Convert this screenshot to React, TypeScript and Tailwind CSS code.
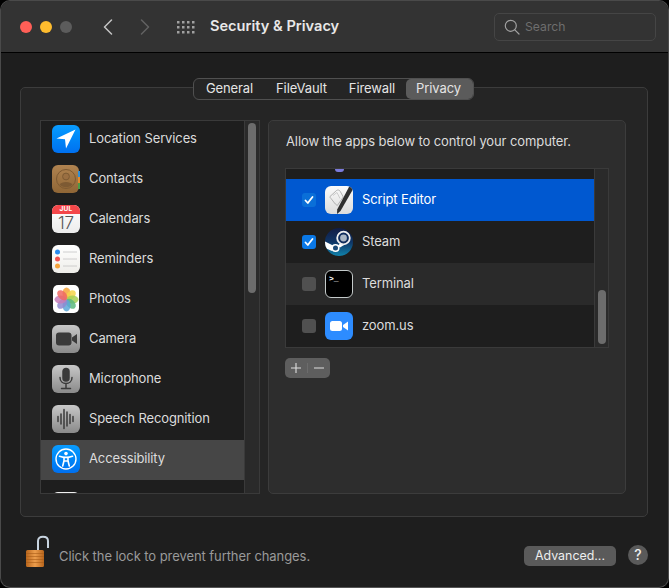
import React from "react";

const Tile = ({ className = "", children }: { className?: string; children?: React.ReactNode }) => (
  <div className={`w-[28px] h-[28px] shrink-0 rounded-[6px] flex items-center justify-center overflow-hidden ${className}`}>{children}</div>
);

const LocationIcon = () => (
  <Tile className="bg-linear-to-b from-[#0a9cff] to-[#0070f0]">
    <svg width="28" height="28" viewBox="0 0 28 28"><path d="M4.5 13.5 23.5 4.5 14 23.5 13 14.2Z" fill="#fff" /></svg>
  </Tile>
);
const ContactsIcon = () => (
  <div className="w-[28px] h-[28px] shrink-0 relative">
    <div className="absolute right-0 top-[6px] w-[2px] h-[6px] bg-[#2f8fd8]" />
    <div className="absolute right-0 top-[12px] w-[2px] h-[6px] bg-[#e08a2c]" />
    <div className="absolute right-0 top-[18px] w-[2px] h-[6px] bg-[#4b9a45]" />
    <Tile className="!w-[27px] bg-linear-to-b from-[#b08350] to-[#8f6636]">
      <svg width="22" height="22" viewBox="0 0 22 22" fill="none" stroke="#7d5a33" strokeWidth="1"><circle cx="11" cy="11" r="9.5" /><circle cx="11" cy="8.5" r="3.4" fill="#9a6f42" /><path d="M4.5 16.5c2-3.5 11-3.5 13 0-3 3.5-10 3.5-13 0Z" fill="#7d5a33" stroke="none" /></svg>
    </Tile>
  </div>
);
const CalendarIcon = () => (
  <Tile className="bg-linear-to-b from-[#ffffff] to-[#ececec] flex-col !justify-start">
    <div className="w-full h-[8.5px] shrink-0 bg-[#f4474a] text-white text-[6.5px] leading-[9px] font-bold text-center tracking-[0.3px]">JUL</div>
    <div className="text-[#555] text-[17px] leading-[19px] font-light">17</div>
  </Tile>
);
const RemindersIcon = () => (
  <Tile className="bg-linear-to-b from-[#ffffff] to-[#efeeea]">
    <svg width="28" height="28" viewBox="0 0 28 28"><circle cx="5.5" cy="7" r="2.5" fill="#2a8cf0" /><circle cx="5.5" cy="14" r="2.5" fill="#f2524f" /><circle cx="5.5" cy="21" r="2.5" fill="#f5a33c" /><path d="M11 7h14M11 14h14M11 21h14" stroke="#c4c4c4" strokeWidth="0.8" /></svg>
  </Tile>
);
const PhotosIcon = () => {
  const colors = ["#f6a43a", "#f4d34a", "#a5cf55", "#5cb97f", "#5aa7d8", "#8f8ad0", "#c77db8", "#ee6a63"];
  return (
    <Tile className="bg-white !w-[26px] mx-[1px] !rounded-[5px]">
      <svg width="25" height="25" viewBox="-12.5 -12.5 25 25">
        {colors.map((c, i) => (
          <ellipse key={c} cx="0" cy="-6" rx="4" ry="6" fill={c} opacity="0.85" transform={`rotate(${i * 45})`} />
        ))}
      </svg>
    </Tile>
  );
};
const grayTile = "bg-linear-to-b from-[#c8c8c8] to-[#8a8a8a]";
const CameraIcon = () => (
  <Tile className={grayTile}>
    <svg width="28" height="28" viewBox="0 0 28 28" fill="#3a3a3a"><rect x="4" y="7.5" width="15.5" height="13" rx="3" /><path d="m20 12.5 5-3.5v10l-5-3.5Z" /></svg>
  </Tile>
);
const MicIcon = () => (
  <Tile className={grayTile}>
    <svg width="28" height="28" viewBox="0 0 28 28" fill="none" stroke="#3a3a3a" strokeWidth="1.5" strokeLinecap="round"><rect x="11" y="3.5" width="6" height="12.5" rx="3" fill="#3a3a3a" /><path d="M8 12.5c0 8 12 8 12 0M14 18.5v4.5M9.5 23.5h9" /></svg>
  </Tile>
);
const SpeechIcon = () => (
  <Tile className={grayTile}>
    <svg width="28" height="28" viewBox="0 0 28 28" stroke="#3a3a3a" strokeWidth="1.5" strokeLinecap="round"><path d="M6 11.5v5M9 9v10M12 4.5v19M15 7v14M18 9.5v9M21 11.5v5" /></svg>
  </Tile>
);
const AccessIcon = () => (
  <Tile className="bg-linear-to-b from-[#0a9cff] to-[#0070f0]">
    <svg width="28" height="28" viewBox="0 0 28 28" fill="none" stroke="#fff"><circle cx="14" cy="14" r="10" strokeWidth="1.4" /><circle cx="14" cy="8.6" r="1.8" fill="#fff" stroke="none" /><path d="M7.5 11.2 12 12.4v3.4L10.7 21M20.5 11.2 16 12.4v3.4L17.3 21M12 12.4h4M12.2 16h3.6" strokeWidth="1.6" strokeLinecap="round" /></svg>
  </Tile>
);
const ScriptIcon = () => (
  <Tile className="bg-linear-to-b from-[#fbfbfb] to-[#dcdcdc]">
    <svg width="28" height="28" viewBox="0 0 28 28" fill="none"><path d="M5 10.5 11.5 4.5c1.500-1 3-.5 3.800 1l3 5.500-6 8.500-2-1.500L6 12.500c-.8-.8-1.200-1.300-1-2Z" stroke="#a2a2a2" strokeWidth="0.8" /><path d="M8 9.500l4-3 3 6" stroke="#bcbcbc" strokeWidth="0.7" /><path d="M25 -1 29 1.500 15.500 25 12 28l.2-4.500Z" fill="#2f2f2f" /></svg>
  </Tile>
);
const SteamIcon = () => (
  <div className="w-[28px] h-[28px] shrink-0 rounded-full bg-linear-to-b from-[#101c45] via-[#0e3566] to-[#0f84ad] overflow-hidden">
    <svg width="28" height="28" viewBox="0 0 28 28" fill="none"><path d="M0 13.500 9 18 7 23 0 20Z" fill="#fff" /><circle cx="10.500" cy="20" r="3.300" fill="#1a4a78" stroke="#fff" strokeWidth="1.600" /><path d="m12.500 18 5-5 3 3-5.500 3.500Z" fill="#fff" /><circle cx="18.500" cy="10" r="6.300" fill="#0f2c5c" stroke="#f0f0f0" strokeWidth="1.800" /><circle cx="18.500" cy="10" r="3.400" fill="#aab6c4" /></svg>
  </div>
);
const TerminalIcon = () => (
  <Tile className="bg-black border-[1.5px] border-[#c4caca] !rounded-[6px] !items-start !justify-start">
    <span className="text-white font-['Liberation_Mono',monospace] text-[8px] leading-[8px] font-bold ml-[3px] mt-[4px]">&gt;_</span>
  </Tile>
);
const ZoomIcon = () => (
  <Tile className="bg-[#2d8cff]">
    <svg width="20" height="20" viewBox="0 0 20 20" fill="#fff"><rect x="1" y="5" width="12" height="10" rx="2.500" /><path d="m14 9 5-3.500v9L14 11Z" /></svg>
  </Tile>
);

const sidebar: { name: string; icon: React.ReactNode; active?: boolean }[] = [
  { name: "Location Services", icon: <LocationIcon /> },
  { name: "Contacts", icon: <ContactsIcon /> },
  { name: "Calendars", icon: <CalendarIcon /> },
  { name: "Reminders", icon: <RemindersIcon /> },
  { name: "Photos", icon: <PhotosIcon /> },
  { name: "Camera", icon: <CameraIcon /> },
  { name: "Microphone", icon: <MicIcon /> },
  { name: "Speech Recognition", icon: <SpeechIcon /> },
  { name: "Accessibility", icon: <AccessIcon />, active: true },
];

const Check = ({ on, selected }: { on: boolean; selected?: boolean }) => (
  <div className={`w-[14px] h-[14px] rounded-[3px] flex items-center justify-center ${on ? (selected ? "bg-[#0a6fd8]" : "bg-[#0a78e6]") : "bg-[#505050]"}`}>
    {on && (
      <svg width="12" height="12" viewBox="0 0 12 12" fill="none" stroke="#fff" strokeWidth="1.8" strokeLinecap="round" strokeLinejoin="round"><path d="m2.500 6.500 2.300 2.500 4.700-6" /></svg>
    )}
  </div>
);

const apps = [
  { name: "Script Editor", icon: <ScriptIcon />, on: true, cls: "bg-[#0058d0] text-white", sel: true },
  { name: "Steam", icon: <SteamIcon />, on: true, cls: "bg-[#1e1e1e] text-[#dcdcdc]" },
  { name: "Terminal", icon: <TerminalIcon />, on: false, cls: "bg-[#2a2a2a] text-[#dcdcdc]" },
  { name: "zoom.us", icon: <ZoomIcon />, on: false, cls: "bg-[#1e1e1e] text-[#dcdcdc]" },
];

export default function App() {
  return (
    <div className="w-[669px] h-[588px] bg-black font-['Inter',sans-serif] overflow-hidden">
      <div className="w-full h-full rounded-[10px] bg-[#1e1e1e] border border-[#4a4a4a] border-b-[#555] flex flex-col overflow-hidden relative">
        {/* title bar */}
        <div className="h-[52px] shrink-0 bg-[#333333] border-b border-black flex items-center pl-[19px] pr-[12px]">
          <div className="flex gap-[8px]">
            <div className="w-[12px] h-[12px] rounded-full bg-[#ff5f57]" />
            <div className="w-[12px] h-[12px] rounded-full bg-[#febc2e]" />
            <div className="w-[12px] h-[12px] rounded-full bg-[#5c5c5c]" />
          </div>
          <svg className="ml-[31px]" width="10" height="16" viewBox="0 0 10 16" fill="none" stroke="#c4c4c4" strokeWidth="1.500" strokeLinecap="round" strokeLinejoin="round"><path d="M8.500 1 1.500 8l7 7" /></svg>
          <svg className="ml-[27px]" width="10" height="16" viewBox="0 0 10 16" fill="none" stroke="#626262" strokeWidth="1.500" strokeLinecap="round" strokeLinejoin="round"><path d="m1.500 1 7 7-7 7" /></svg>
          <svg className="ml-[27px]" width="18" height="14" viewBox="0 0 18 14" fill="#a0a0a0">
            {[0, 5, 10, 15].flatMap((x) => [1, 6, 11].map((y) => <rect key={`${x}-${y}`} x={x} y={y} width="2.500" height="2.500" />))}
          </svg>
          <div className="ml-[15px] text-[14.6px] font-semibold text-[#e8e8e8]">Security &amp; Privacy</div>
          <div className="ml-auto w-[162px] h-[28px] rounded-[5px] border border-[#454545] flex items-center pl-[9px] gap-[5px]">
            <svg width="16" height="16" viewBox="0 0 16 16" fill="none" stroke="#a0a0a0" strokeWidth="1.200" strokeLinecap="round"><circle cx="6.800" cy="6.800" r="5.500" /><path d="m10.800 10.800 4.200 4.200" /></svg>
            <span className="text-[12.2px] pt-[1px] text-[#6e6e6e]">Search</span>
          </div>
        </div>

        {/* group box */}
        <div className="relative mt-[34px] ml-[19px] w-[628px] h-[430px] shrink-0 rounded-[5px] border border-[#3c3c3c] bg-[#252525] flex gap-[8px] pl-[19px] pt-[32px]">
          <div className="absolute -top-[10px] left-[172px] h-[22px] w-[281px] rounded-[6px] border border-[#505050] bg-[#252525] flex items-center text-[13px] tracking-[-0.1px] text-[#e4e4e4]">
            <div className="w-[71px] text-center pb-[1px]">General</div>
            <div className="w-[73px] text-center pb-[1px]">FileVault</div>
            <div className="w-[68px] text-center pb-[1px]">Firewall</div>
            <div className="flex-1 h-full bg-[#5b5b5b] rounded-[5px] flex items-center justify-center pb-[1px] pr-[2px]">Privacy</div>
          </div>

          {/* left list */}
          <div className="w-[220px] h-[374px] shrink-0 border border-[#3a3a3a] bg-[#2a2a2a] flex">
            <div className="w-[203px] bg-[#1e1e1e] overflow-hidden">
              <div className="-mt-[1px]">
                {sidebar.map((s) => (
                  <div key={s.name} className={`h-[40px] flex items-center pl-[11px] pb-[2px] gap-[9px] text-[13px] tracking-[-0.12px] text-[#dcdcdc] ${s.active ? "bg-[#464646]" : ""}`}>
                    {s.icon}
                    <span>{s.name}</span>
                  </div>
                ))}
                <div className="h-[40px] pl-[11px] pt-[12px]"><div className="w-[28px] h-[28px] rounded-[6px] bg-[#f0f0f0]" /></div>
              </div>
            </div>
            <div className="flex-1 border-l border-[#3a3a3a] pl-[3px] pt-[2px]">
              <div className="w-[8px] h-[170px] rounded-full bg-[#6c6c6c]" />
            </div>
          </div>

          {/* right panel */}
          <div className="w-[358px] h-[374px] shrink-0 rounded-[5px] border border-[#3c3c3c] bg-[#2d2d2d] pl-[16px] flex flex-col">
            <div className="h-[47px] pt-[12px] pl-[1px] text-[13px] tracking-[-0.1px] text-[#dcdcdc] leading-[16px]">Allow the apps below to control your computer.</div>
            <div className="w-[324px] h-[180px] border border-[#3a3a3a] flex">
              <div className="w-[308px] bg-[#1e1e1e]">
                <div className="h-[10px] pl-[49px]"><div className="w-[9px] h-[3px] rounded-b-full bg-[#7b7bdc]" /></div>
                {apps.map((a) => (
                  <div key={a.name} className={`h-[42px] flex items-center pl-[16px] text-[13px] tracking-[-0.12px] ${a.cls}`}>
                    <Check on={a.on} selected={a.sel} />
                    <div className="ml-[9px]">{a.icon}</div>
                    <span className="ml-[9px]">{a.name}</span>
                  </div>
                ))}
              </div>
              <div className="flex-1 border-l border-[#3a3a3a] pl-[3px] pt-[121px] bg-[#2a2a2a]">
                <div className="w-[8px] h-[54px] rounded-full bg-[#6c6c6c]" />
              </div>
            </div>
            <div className="mt-[10px] w-[45px] h-[20px] rounded-[5px] bg-[#5e5e5e] flex items-center text-[#e4e4e4]">
              <svg width="45" height="20" viewBox="0 0 45 20" fill="none" stroke="#dedede" strokeWidth="1.100"><path d="M6 10h10M11 5v10M29 10h10" /><path d="M22.500 5v10" stroke="#707070" strokeWidth="0.800" /></svg>
            </div>
          </div>
        </div>

        {/* footer */}
        <div className="flex-1 flex items-start pl-[24px] pr-[20px] pt-[16px] relative">
          <svg width="26" height="34" viewBox="0 0 26 34" fill="none" className="shrink-0">
            <defs><linearGradient id="lk" x1="0" x2="1"><stop offset="0" stopColor="#b8651c" /><stop offset="0.5" stopColor="#ec9d4c" /><stop offset="1" stopColor="#b8651c" /></linearGradient></defs>
            <path d="M13 18V8C13 5 15 3.800 18 3.800s5 1.200 5 4.200v7" stroke="#c8d4e0" strokeWidth="2" />
            <rect x="1" y="17" width="18" height="17" rx="1.500" fill="url(#lk)" />
            <path d="M1 20.500h18M1 23.500h18M1 26.500h18M1 29.500h18" stroke="#a85c18" strokeWidth="0.600" />
          </svg>
          <span className="ml-[8px] mt-[15px] text-[13px] tracking-[-0.07px] leading-[16px] text-[#9a9a9a]">Click the lock to prevent further changes.</span>
          <div className="ml-auto mt-[13px] w-[92px] h-[20px] rounded-[5px] bg-[#5a5a5a] text-[12.4px] leading-[19px] text-center text-[#eeeeee]">Advanced...</div>
          <div className="ml-[12px] mt-[12px] w-[20px] h-[20px] rounded-full bg-[#5a5a5a] text-[14px] leading-[20px] text-center font-medium text-[#eeeeee]">?</div>
        </div>
      </div>
    </div>
  );
}
